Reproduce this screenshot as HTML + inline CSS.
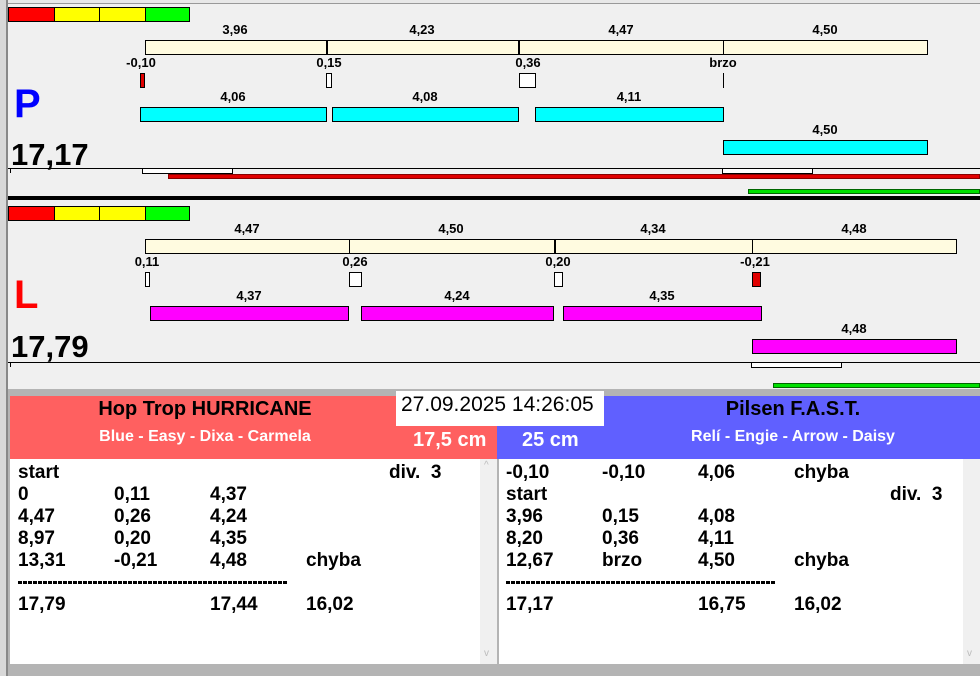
<!DOCTYPE html>
<html><head><meta charset="utf-8"><style>
*{margin:0;padding:0;box-sizing:border-box}
body{width:980px;height:676px;background:#f0f0f0;position:relative;overflow:hidden;font-family:"Liberation Sans",Arial,sans-serif}
.a{position:absolute}
.l{position:absolute;font-size:13px;font-weight:bold;width:60px;text-align:center;margin-left:-30px;line-height:14px}
.b{position:absolute;border:1px solid #000}
.r{position:absolute;font-size:19px;font-weight:bold;line-height:22px;white-space:pre;margin-top:2px}
.d{position:absolute;height:3px;background:repeating-linear-gradient(90deg,#000 0 4px,transparent 4px 5px)}
</style></head><body>
<div class="a" style="left:0;top:0;width:980px;height:4px;background:#e8e8e8;border-bottom:1px solid #999"></div>
<div class="a" style="left:0;top:0;width:8px;height:676px;background:#d8d8d8;border-right:2px solid #888"></div>

<!-- P section -->
<div class="b" style="left:8px;top:7px;width:47px;height:15px;background:#f00"></div>
<div class="b" style="left:54px;top:7px;width:46px;height:15px;background:#ff0"></div>
<div class="b" style="left:99px;top:7px;width:47px;height:15px;background:#ff0"></div>
<div class="b" style="left:145px;top:7px;width:45px;height:15px;background:#0f0"></div>

<div class="l" style="left:235px;top:23px">3,96</div>
<div class="l" style="left:422px;top:23px">4,23</div>
<div class="l" style="left:621px;top:23px">4,47</div>
<div class="l" style="left:825px;top:23px">4,50</div>
<div class="b" style="left:145px;top:40px;width:182px;height:15px;background:#fffbe0"></div>
<div class="b" style="left:326px;top:40px;width:193px;height:15px;background:#fffbe0;border-left-width:2px"></div>
<div class="b" style="left:518px;top:40px;width:206px;height:15px;background:#fffbe0;border-left-width:2px"></div>
<div class="b" style="left:723px;top:40px;width:205px;height:15px;background:#fffbe0"></div>

<div class="l" style="left:141px;top:56px">-0,10</div>
<div class="l" style="left:329px;top:56px">0,15</div>
<div class="l" style="left:528px;top:56px">0,36</div>
<div class="l" style="left:723px;top:56px">brzo</div>
<div class="b" style="left:140px;top:73px;width:5px;height:15px;background:#e00000"></div>
<div class="b" style="left:326px;top:73px;width:6px;height:15px;background:#fff"></div>
<div class="b" style="left:519px;top:73px;width:17px;height:15px;background:#fff"></div>
<div class="a" style="left:723px;top:73px;width:1px;height:15px;background:#000"></div>

<div class="a" style="left:14px;top:80px;font-size:40px;font-weight:bold;color:#0000ff;line-height:48px">P</div>

<div class="l" style="left:233px;top:90px">4,06</div>
<div class="l" style="left:425px;top:90px">4,08</div>
<div class="l" style="left:629px;top:90px">4,11</div>
<div class="b" style="left:140px;top:107px;width:187px;height:15px;background:#00ffff"></div>
<div class="b" style="left:332px;top:107px;width:187px;height:15px;background:#00ffff"></div>
<div class="b" style="left:535px;top:107px;width:189px;height:15px;background:#00ffff"></div>
<div class="l" style="left:825px;top:123px">4,50</div>
<div class="b" style="left:723px;top:140px;width:205px;height:15px;background:#00ffff"></div>

<div class="a" style="left:11px;top:137px;font-size:31px;font-weight:bold;line-height:36px">17,17</div>
<div class="a" style="left:8px;top:168px;width:972px;height:1px;background:#000"></div>
<div class="a" style="left:10px;top:168px;width:1px;height:5px;background:#000"></div>
<div class="b" style="left:142px;top:168px;width:91px;height:6px;background:#fff"></div>
<div class="b" style="left:722px;top:168px;width:91px;height:6px;background:#fff"></div>
<div class="a" style="left:168px;top:174px;width:812px;height:5px;background:#e00000;border:1px solid #800"></div>
<div class="a" style="left:748px;top:189px;width:232px;height:5px;background:#00e000;border:1px solid #060"></div>
<div class="a" style="left:8px;top:196px;width:972px;height:4px;background:#000"></div>

<!-- L section -->
<div class="b" style="left:8px;top:206px;width:47px;height:15px;background:#f00"></div>
<div class="b" style="left:54px;top:206px;width:46px;height:15px;background:#ff0"></div>
<div class="b" style="left:99px;top:206px;width:47px;height:15px;background:#ff0"></div>
<div class="b" style="left:145px;top:206px;width:45px;height:15px;background:#0f0"></div>

<div class="l" style="left:247px;top:222px">4,47</div>
<div class="l" style="left:451px;top:222px">4,50</div>
<div class="l" style="left:653px;top:222px">4,34</div>
<div class="l" style="left:854px;top:222px">4,48</div>
<div class="b" style="left:145px;top:239px;width:205px;height:15px;background:#fffbe0"></div>
<div class="b" style="left:349px;top:239px;width:206px;height:15px;background:#fffbe0"></div>
<div class="b" style="left:554px;top:239px;width:199px;height:15px;background:#fffbe0;border-left-width:2px"></div>
<div class="b" style="left:752px;top:239px;width:205px;height:15px;background:#fffbe0"></div>

<div class="l" style="left:147px;top:255px">0,11</div>
<div class="l" style="left:355px;top:255px">0,26</div>
<div class="l" style="left:558px;top:255px">0,20</div>
<div class="l" style="left:755px;top:255px">-0,21</div>
<div class="b" style="left:145px;top:272px;width:5px;height:15px;background:#fff"></div>
<div class="b" style="left:349px;top:272px;width:13px;height:15px;background:#fff"></div>
<div class="b" style="left:554px;top:272px;width:9px;height:15px;background:#fff"></div>
<div class="b" style="left:752px;top:272px;width:9px;height:15px;background:#e00000"></div>

<div class="a" style="left:14px;top:271px;font-size:40px;font-weight:bold;color:#f00;line-height:48px">L</div>

<div class="l" style="left:249px;top:289px">4,37</div>
<div class="l" style="left:457px;top:289px">4,24</div>
<div class="l" style="left:662px;top:289px">4,35</div>
<div class="b" style="left:150px;top:306px;width:199px;height:15px;background:#ff00ff"></div>
<div class="b" style="left:361px;top:306px;width:193px;height:15px;background:#ff00ff"></div>
<div class="b" style="left:563px;top:306px;width:199px;height:15px;background:#ff00ff"></div>
<div class="l" style="left:854px;top:322px">4,48</div>
<div class="b" style="left:752px;top:339px;width:205px;height:15px;background:#ff00ff"></div>

<div class="a" style="left:11px;top:329px;font-size:31px;font-weight:bold;line-height:36px">17,79</div>
<div class="a" style="left:8px;top:362px;width:972px;height:1px;background:#000"></div>
<div class="a" style="left:10px;top:362px;width:1px;height:5px;background:#000"></div>
<div class="b" style="left:751px;top:362px;width:91px;height:6px;background:#fff"></div>
<div class="a" style="left:773px;top:383px;width:207px;height:5px;background:#00e000;border:1px solid #060"></div>

<!-- bottom -->
<div class="a" style="left:8px;top:389px;width:972px;height:287px;background:#b4b4b4"></div>
<div class="a" style="left:10px;top:396px;width:487px;height:63px;background:#ff6060"></div>
<div class="a" style="left:497px;top:396px;width:483px;height:63px;background:#6060ff"></div>
<div class="a" style="left:10px;top:398px;width:390px;text-align:center;font-size:20px;font-weight:bold;line-height:22px">Hop Trop HURRICANE</div>
<div class="a" style="left:10px;top:428px;width:390px;text-align:center;font-size:16px;font-weight:bold;color:#fff;line-height:18px">Blue - Easy - Dixa - Carmela</div>
<div class="a" style="left:603px;top:398px;width:380px;text-align:center;font-size:20px;font-weight:bold;line-height:22px">Pilsen F.A.S.T.</div>
<div class="a" style="left:603px;top:428px;width:380px;text-align:center;font-size:16px;font-weight:bold;color:#fff;line-height:18px">Relí - Engie - Arrow - Daisy</div>
<div class="a" style="left:396px;top:391px;width:208px;height:35px;background:#fff;font-size:21px;line-height:27px;padding-left:5px;white-space:nowrap">27.09.2025 14:26:05</div>
<div class="a" style="left:413px;top:429px;font-size:20px;font-weight:bold;color:#fff;line-height:22px">17,5 cm</div>
<div class="a" style="left:522px;top:429px;font-size:20px;font-weight:bold;color:#fff;line-height:22px">25 cm</div>

<div class="a" style="left:10px;top:459px;width:487px;height:205px;background:#fff"></div>
<div class="a" style="left:480px;top:459px;width:17px;height:205px;background:#f0f0f0"></div>
<div class="a" style="left:499px;top:459px;width:481px;height:205px;background:#fff"></div>
<div class="a" style="left:963px;top:459px;width:17px;height:205px;background:#f0f0f0"></div>
<div class="a" style="left:484px;top:460px;font-size:10px;color:#bbb">^</div>
<div class="a" style="left:484px;top:648px;font-size:10px;color:#bbb">v</div>
<div class="a" style="left:967px;top:648px;font-size:10px;color:#bbb">v</div>

<div class="r" style="left:18px;top:460px">start</div><div class="r" style="left:389px;top:460px">div.  3</div>
<div class="r" style="left:18px;top:482px">0</div><div class="r" style="left:114px;top:482px">0,11</div><div class="r" style="left:210px;top:482px">4,37</div>
<div class="r" style="left:18px;top:504px">4,47</div><div class="r" style="left:114px;top:504px">0,26</div><div class="r" style="left:210px;top:504px">4,24</div>
<div class="r" style="left:18px;top:526px">8,97</div><div class="r" style="left:114px;top:526px">0,20</div><div class="r" style="left:210px;top:526px">4,35</div>
<div class="r" style="left:18px;top:548px">13,31</div><div class="r" style="left:114px;top:548px">-0,21</div><div class="r" style="left:210px;top:548px">4,48</div><div class="r" style="left:306px;top:548px">chyba</div>
<div class="d" style="left:18px;top:581px;width:270px"></div>
<div class="r" style="left:18px;top:592px">17,79</div><div class="r" style="left:210px;top:592px">17,44</div><div class="r" style="left:306px;top:592px">16,02</div>

<div class="r" style="left:506px;top:460px">-0,10</div><div class="r" style="left:602px;top:460px">-0,10</div><div class="r" style="left:698px;top:460px">4,06</div><div class="r" style="left:794px;top:460px">chyba</div>
<div class="r" style="left:506px;top:482px">start</div><div class="r" style="left:890px;top:482px">div.  3</div>
<div class="r" style="left:506px;top:504px">3,96</div><div class="r" style="left:602px;top:504px">0,15</div><div class="r" style="left:698px;top:504px">4,08</div>
<div class="r" style="left:506px;top:526px">8,20</div><div class="r" style="left:602px;top:526px">0,36</div><div class="r" style="left:698px;top:526px">4,11</div>
<div class="r" style="left:506px;top:548px">12,67</div><div class="r" style="left:602px;top:548px">brzo</div><div class="r" style="left:698px;top:548px">4,50</div><div class="r" style="left:794px;top:548px">chyba</div>
<div class="d" style="left:506px;top:581px;width:270px"></div>
<div class="r" style="left:506px;top:592px">17,17</div><div class="r" style="left:698px;top:592px">16,75</div><div class="r" style="left:794px;top:592px">16,02</div>
</body></html>
